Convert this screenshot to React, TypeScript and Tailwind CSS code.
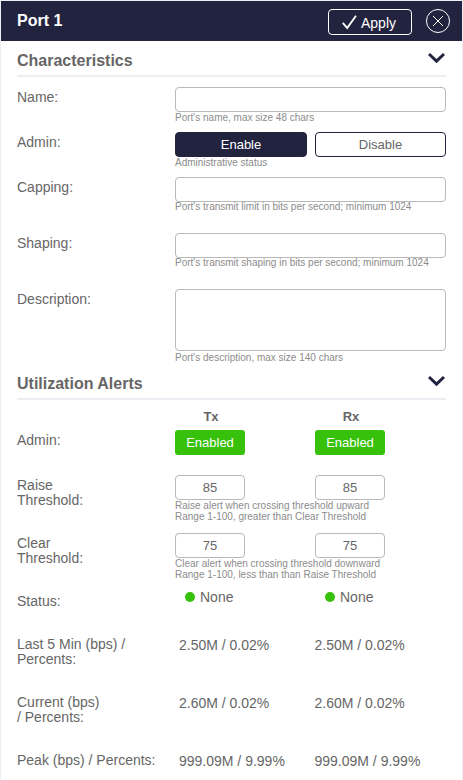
import type { ReactNode } from "react";

function Chevron() {
  return (
    <svg className="mt-[11px] block" width="18" height="12" viewBox="0 0 18 12" fill="none" stroke="#22233f" strokeWidth="3">
      <path d="M1 2 L8.5 9.2 L16 2" />
    </svg>
  );
}

function SectionTitle({ children }: { children: ReactNode }) {
  return (
    <div className="flex h-9 shrink-0 justify-between border-b-2 border-[#ebeff4]">
      <h2 className="mt-[11px] text-[16px] leading-[18px] font-bold text-[#666]">{children}</h2>
      <Chevron />
    </div>
  );
}

function Row({ label, height, children }: { label: ReactNode; height: string; children: ReactNode }) {
  return (
    <div className={`flex shrink-0 ${height}`}>
      <div className="w-[158px] shrink-0 pt-[3px] leading-[15px] whitespace-nowrap">{label}</div>
      <div className="min-w-0 flex-1">{children}</div>
    </div>
  );
}

function Hint({ children, className = "" }: { children: ReactNode; className?: string }) {
  return <div className={`text-[10px] leading-[11px] whitespace-nowrap text-[#8c8c8c] ${className}`}>{children}</div>;
}

const field = "block rounded-[4px] border border-[#b9b9b9] bg-white outline-none";

function Pair({ value }: { value: string }) {
  return (
    <div className="flex gap-[70px]">
      {["Tx", "Rx"].map((k) => (
        <input key={k} defaultValue={value} className={`${field} h-[25px] w-[70px] text-center text-[13px]`} />
      ))}
    </div>
  );
}

function Enabled() {
  return (
    <button className="block h-[25px] w-[70px] rounded-[3px] bg-[#37c10b] text-[13px] leading-[25px] text-white">Enabled</button>
  );
}

function Status() {
  return (
    <div className="flex w-[140px] shrink-0 items-start gap-[5px] pl-[10px] leading-[15px]">
      <span className="mt-[2px] h-[10px] w-[10px] rounded-full bg-[#37c10b]" />
      <span>None</span>
    </div>
  );
}

function Values({ value }: { value: string }) {
  return (
    <div className="flex pt-[4px] pl-1 leading-[15px] whitespace-nowrap">
      <span className="w-[135.5px] shrink-0">{value}</span>
      <span>{value}</span>
    </div>
  );
}

export default function App() {
  return (
    <div className="flex h-[780px] w-[463px] flex-col overflow-hidden border-x border-t border-[#ebeff4] bg-white font-['Liberation_Sans',Arial,sans-serif] text-[14px] text-[#666]">
      <header className="flex h-10 shrink-0 items-center bg-[#22233f] pr-3 pl-4 text-white">
        <h1 className="flex-1 text-[16px] leading-[18px] font-bold">Port 1</h1>
        <button className="mt-[2px] mr-[14px] flex h-[26px] w-[84px] items-center rounded-[4px] border border-white pl-[13px] text-[14px] leading-[16px]">
          <svg width="15" height="15" viewBox="0 0 15 15" fill="none" stroke="white" strokeWidth="1.9">
            <path d="M.8 7.8 L5.2 13 L14 .8" />
          </svg>
          <span className="mt-[2px] ml-[4px]">Apply</span>
        </button>
        <button aria-label="Close">
          <svg className="block" width="24" height="24" viewBox="0 0 24 24" fill="none" stroke="white" strokeWidth="1">
            <circle cx="12" cy="12" r="11.5" />
            <path d="M7 7 L17 17 M17 7 L7 17" />
          </svg>
        </button>
      </header>

      <main className="flex flex-col px-4">
        <SectionTitle>Characteristics</SectionTitle>
        <div className="flex flex-col pt-[10px]">
          <Row label="Name:" height="h-[45px]">
            <input className={`${field} h-[25px] w-full`} />
            <Hint>Port's name, max size 48 chars</Hint>
          </Row>
          <Row label="Admin:" height="h-[45px]">
            <div className="flex gap-2 text-[13px] leading-[23px]">
              <button className="h-[25px] w-[132px] rounded-[4px] border border-[#22233f] bg-[#22233f] text-white">Enable</button>
              <button className="h-[25px] flex-1 rounded-[4px] border border-[#22233f] bg-white">Disable</button>
            </div>
            <Hint>Administrative status</Hint>
          </Row>
          <Row label="Capping:" height="h-[56px]">
            <input className={`${field} h-[25px] w-full`} />
            <Hint className="-mt-px">Port's transmit limit in bits per second; minimum 1024</Hint>
          </Row>
          <Row label="Shaping:" height="h-[56px]">
            <input className={`${field} h-[25px] w-full`} />
            <Hint className="-mt-px">Port's transmit shaping in bits per second; minimum 1024</Hint>
          </Row>
          <Row label="Description:" height="h-[75px]">
            <textarea className={`${field} h-[62px] w-full resize-none`} />
            <Hint className="mt-px">Port's description, max size 140 chars</Hint>
          </Row>
        </div>

        <SectionTitle>Utilization Alerts</SectionTitle>
        <div className="flex flex-col pt-2">
          <div className="flex h-[22px] gap-[70px] pl-[159px] text-center text-[13px] leading-[17px] font-bold">
            <span className="w-[70px]">Tx</span>
            <span className="w-[70px]">Rx</span>
          </div>
          <Row label="Admin:" height="h-[45px]">
            <div className="flex gap-[70px]">
              <Enabled />
              <Enabled />
            </div>
          </Row>
          <Row label={<>Raise<br />Threshold:</>} height="h-[58px]">
            <Pair value="85" />
            <Hint>Raise alert when crossing threshold upward<br />Range 1-100, greater than Clear Threshold</Hint>
          </Row>
          <Row label={<>Clear<br />Threshold:</>} height="h-[58px]">
            <Pair value="75" />
            <Hint>Clear alert when crossing threshold downward<br />Range 1-100, less than than Raise Threshold</Hint>
          </Row>
          <Row label="Status:" height="h-[43px]">
            <div className="-mt-px flex">
              <Status />
              <Status />
            </div>
          </Row>
          <Row label={<>Last 5 Min (bps) /<br />Percents:</>} height="h-[58px]">
            <Values value="2.50M / 0.02%" />
          </Row>
          <Row label={<>Current (bps)<br />/ Percents:</>} height="h-[58px]">
            <Values value="2.60M / 0.02%" />
          </Row>
          <Row label="Peak (bps) / Percents:" height="h-[29px]">
            <Values value="999.09M / 9.99%" />
          </Row>
        </div>
      </main>
    </div>
  );
}
